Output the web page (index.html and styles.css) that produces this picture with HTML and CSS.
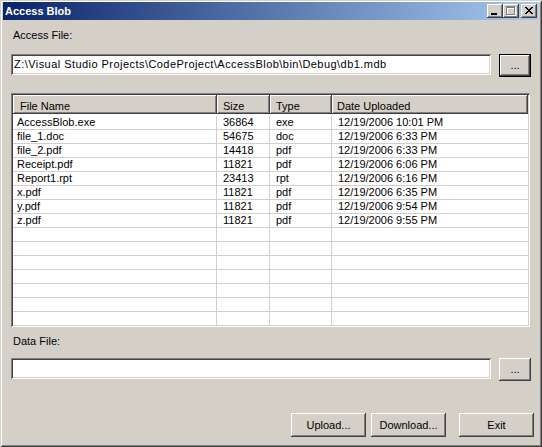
FILE: index.html
```html
<!DOCTYPE html>
<html>
<head>
<meta charset="utf-8">
<title>Access Blob</title>
<link rel="stylesheet" href="styles.css">
</head>
<body>
<div class="window">
  <div class="titlebar">
    <span class="title">Access Blob</span>
    <div class="caption-buttons">
      <span class="cap-btn"><svg width="16" height="14" viewBox="0 0 16 14"><rect x="4" y="9" width="6" height="2" fill="#000"/></svg></span>
      <span class="cap-btn"><svg width="16" height="14" viewBox="0 0 16 14"><g fill="#fff"><rect x="4" y="3" width="9" height="2"/><rect x="4" y="3" width="1" height="9"/><rect x="12" y="3" width="1" height="9"/><rect x="4" y="11" width="9" height="1"/></g><g fill="#808080"><rect x="3" y="2" width="9" height="2"/><rect x="3" y="2" width="1" height="9"/><rect x="11" y="2" width="1" height="9"/><rect x="3" y="10" width="9" height="1"/></g></svg></span>
      <span class="cap-btn close"><svg width="16" height="14" viewBox="0 0 16 14"><path fill="#000" d="M4 3h2v1h-2z M10 3h2v1h-2z M5 4h2v1h-2z M9 4h2v1h-2z M6 5h4v1h-4z M7 6h2v1h-2z M6 7h4v1h-4z M5 8h2v1h-2z M9 8h2v1h-2z M4 9h2v1h-2z M10 9h2v1h-2z"/></svg></span>
    </div>
  </div>
  <div class="content">
    <div class="label label-access">Access File:</div>
    <div class="field-row">
      <div class="textbox">Z:\Visual Studio Projects\CodeProject\AccessBlob\bin\Debug\db1.mdb</div>
      <div class="btn btn-default browse">...</div>
    </div>
    <div class="listview">
      <div class="lv-header">
        <div class="hcell col1">File Name</div>
        <div class="hcell col2">Size</div>
        <div class="hcell col3">Type</div>
        <div class="hcell col4">Date Uploaded</div>
      </div>
      <div class="lv-body">
        <div class="row"><div class="c col1">AccessBlob.exe</div><div class="c col2">36864</div><div class="c col3">exe</div><div class="c col4">12/19/2006 10:01 PM</div></div>
        <div class="row"><div class="c col1">file_1.doc</div><div class="c col2">54675</div><div class="c col3">doc</div><div class="c col4">12/19/2006 6:33 PM</div></div>
        <div class="row"><div class="c col1">file_2.pdf</div><div class="c col2">14418</div><div class="c col3">pdf</div><div class="c col4">12/19/2006 6:33 PM</div></div>
        <div class="row"><div class="c col1">Receipt.pdf</div><div class="c col2">11821</div><div class="c col3">pdf</div><div class="c col4">12/19/2006 6:06 PM</div></div>
        <div class="row"><div class="c col1">Report1.rpt</div><div class="c col2">23413</div><div class="c col3">rpt</div><div class="c col4">12/19/2006 6:16 PM</div></div>
        <div class="row"><div class="c col1">x.pdf</div><div class="c col2">11821</div><div class="c col3">pdf</div><div class="c col4">12/19/2006 6:35 PM</div></div>
        <div class="row"><div class="c col1">y.pdf</div><div class="c col2">11821</div><div class="c col3">pdf</div><div class="c col4">12/19/2006 9:54 PM</div></div>
        <div class="row"><div class="c col1">z.pdf</div><div class="c col2">11821</div><div class="c col3">pdf</div><div class="c col4">12/19/2006 9:55 PM</div></div>
        <div class="row"><div class="c col1"></div><div class="c col2"></div><div class="c col3"></div><div class="c col4"></div></div>
        <div class="row"><div class="c col1"></div><div class="c col2"></div><div class="c col3"></div><div class="c col4"></div></div>
        <div class="row"><div class="c col1"></div><div class="c col2"></div><div class="c col3"></div><div class="c col4"></div></div>
        <div class="row"><div class="c col1"></div><div class="c col2"></div><div class="c col3"></div><div class="c col4"></div></div>
        <div class="row"><div class="c col1"></div><div class="c col2"></div><div class="c col3"></div><div class="c col4"></div></div>
        <div class="row"><div class="c col1"></div><div class="c col2"></div><div class="c col3"></div><div class="c col4"></div></div>
        <div class="row"><div class="c col1"></div><div class="c col2"></div><div class="c col3"></div><div class="c col4"></div></div>
        <div class="row"><div class="c col1"></div><div class="c col2"></div><div class="c col3"></div><div class="c col4"></div></div>
      </div>
    </div>
    <div class="label label-data">Data File:</div>
    <div class="field-row field-row-data">
      <div class="textbox"></div>
      <div class="btn browse">...</div>
    </div>
    <div class="actions">
      <div class="btn action">Upload...</div>
      <div class="btn action">Download...</div>
      <div class="btn action exit">Exit</div>
    </div>
  </div>
</div>
</body>
</html>
```

FILE: styles.css
```css
html, body {
  margin: 0;
  padding: 0;
  background: #d4d0c8;
}

body {
  font-family: "Liberation Sans", Arial, sans-serif;
  font-size: 11px;
  color: #000;
}

.window {
  width: 542px;
  height: 447px;
  box-sizing: border-box;
  padding: 2px 4px 4px 3px;
  background: #d4d0c8;
  box-shadow: inset 1px 1px #d4d0c8, inset -1px -1px #404040, inset 2px 2px #fff, inset -2px -2px #808080;
  display: flex;
  flex-direction: column;
  overflow: hidden;
}

.titlebar {
  height: 18px;
  flex: none;
  display: flex;
  align-items: center;
  justify-content: space-between;
  padding-left: 2px;
  background: linear-gradient(to right, #0a246a, #a6caf0);
}

.title {
  color: #fff;
  font-weight: bold;
  font-size: 11px;
  line-height: 18px;
}

.caption-buttons {
  display: flex;
  margin-right: 1px;
}

.cap-btn {
  width: 16px;
  height: 14px;
  display: block;
  background: #d4d0c8;
  box-shadow: inset -1px -1px #404040, inset 1px 1px #fff, inset -2px -2px #808080;
}

.cap-btn svg {
  display: block;
}

.cap-btn.close {
  margin-left: 2px;
}

.content {
  flex: 1;
  display: flex;
  flex-direction: column;
  padding: 0 4px 0 8px;
}

.label {
  line-height: 13px;
  padding-left: 2px;
}

.label-access {
  margin-top: 9px;
}

.label-data {
  margin-top: 8px;
}

.field-row {
  display: flex;
  align-items: flex-start;
  gap: 8px;
  margin-top: 12px;
}

.field-row-data {
  margin-top: 10px;
}

.textbox {
  width: 480px;
  height: 21px;
  box-sizing: border-box;
  padding: 4px 3px 0 3px;
  line-height: 13px;
  letter-spacing: 0.45px;
  white-space: nowrap;
  overflow: hidden;
  background: #fff;
  box-shadow: inset 1px 1px #808080, inset -1px -1px #fff, inset 2px 2px #404040, inset -2px -2px #d4d0c8;
}

.btn {
  box-sizing: border-box;
  display: flex;
  align-items: center;
  justify-content: center;
  line-height: 13px;
  background: #d4d0c8;
  box-shadow: inset -1px -1px #404040, inset 1px 1px #fff, inset -2px -2px #808080;
}

.btn-default {
  box-shadow: inset 0 0 0 1px #000, inset -2px -2px #404040, inset 2px 2px #fff, inset -3px -3px #808080;
}

.browse {
  width: 32px;
  height: 23px;
}

.listview {
  margin-top: 16px;
  width: 519px;
  height: 234px;
  box-sizing: border-box;
  padding: 2px;
  background: #fff;
  box-shadow: inset 1px 1px #808080, inset -1px -1px #fff, inset 2px 2px #404040, inset -2px -2px #d4d0c8;
  display: flex;
  flex-direction: column;
  overflow: hidden;
}

.lv-header {
  display: flex;
  height: 19px;
  flex: none;
}

.hcell {
  box-sizing: border-box;
  height: 19px;
  padding: 5px 0 1px 6px;
  line-height: 13px;
  white-space: nowrap;
  background: #d4d0c8;
  box-shadow: inset -1px -1px #404040, inset 1px 1px #fff, inset -2px -2px #808080;
}

.hcell.col1 {
  padding-left: 7px;
}

.hcell.col4 {
  padding-left: 5px;
}

.col1 { width: 204px; flex: none; }
.col2 { width: 53px; flex: none; }
.col3 { width: 62px; flex: none; }
.col4 { flex: 1; }

.lv-body {
  flex: 1;
  padding-top: 2px;
  overflow: hidden;
}

.row {
  display: flex;
  height: 14px;
  box-sizing: border-box;
  border-bottom: 1px solid #d0d0d0;
}

.c {
  box-sizing: border-box;
  height: 13px;
  line-height: 13px;
  padding-left: 6px;
  white-space: nowrap;
  border-right: 1px solid #d0d0d0;
}

.c.col1 {
  padding-left: 4px;
}

.c.col4 {
  border-right: none;
}

.actions {
  display: flex;
  justify-content: flex-end;
  gap: 5px;
  margin-top: 32px;
}

.action {
  width: 75px;
  height: 24px;
}

.action.exit {
  margin-left: 8px;
}
```
